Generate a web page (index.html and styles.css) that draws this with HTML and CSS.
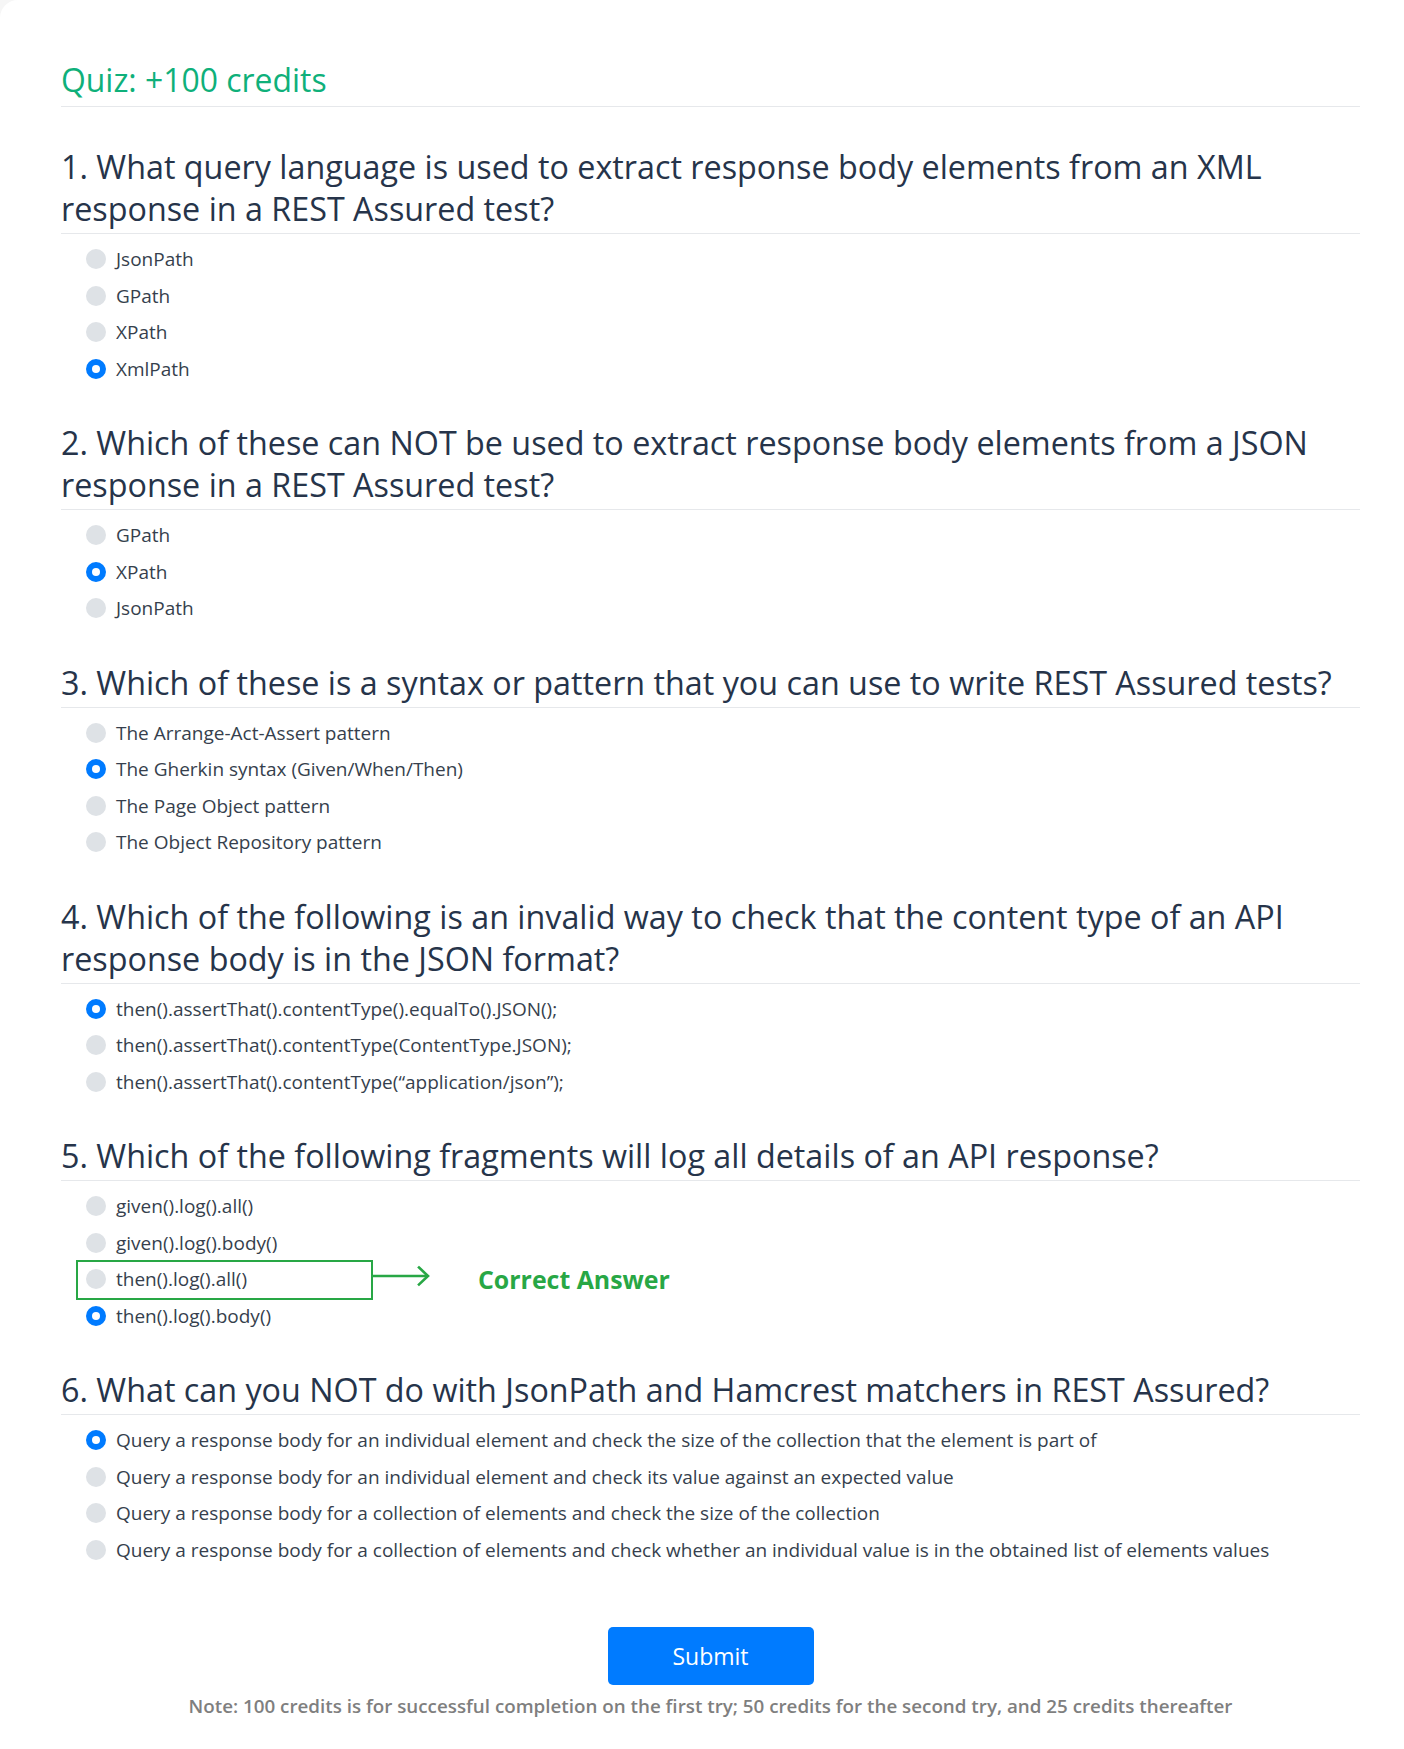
FILE: index.html
```html
<!DOCTYPE html>
<html lang="en">
<head>
<meta charset="utf-8">
<title>Quiz</title>
<link rel="stylesheet" href="styles.css">
</head>
<body>
<main class="card">
  <h2 class="quiz-title">Quiz: +100 credits</h2>
  <hr class="rule rule-title">

  <section class="question">
    <h3 class="q-head">1. What query language is used to extract response body elements from an XML response in a REST Assured test?</h3>
    <hr class="rule">
    <ul class="options">
      <li class="option"><span class="radio"></span><span class="label">JsonPath</span></li>
      <li class="option"><span class="radio"></span><span class="label">GPath</span></li>
      <li class="option"><span class="radio"></span><span class="label">XPath</span></li>
      <li class="option"><span class="radio checked"></span><span class="label">XmlPath</span></li>
    </ul>
  </section>

  <section class="question">
    <h3 class="q-head">2. Which of these can NOT be used to extract response body elements from a JSON response in a REST Assured test?</h3>
    <hr class="rule">
    <ul class="options">
      <li class="option"><span class="radio"></span><span class="label">GPath</span></li>
      <li class="option"><span class="radio checked"></span><span class="label">XPath</span></li>
      <li class="option"><span class="radio"></span><span class="label">JsonPath</span></li>
    </ul>
  </section>

  <section class="question">
    <h3 class="q-head">3. Which of these is a syntax or pattern that you can use to write REST Assured tests?</h3>
    <hr class="rule">
    <ul class="options">
      <li class="option"><span class="radio"></span><span class="label">The Arrange-Act-Assert pattern</span></li>
      <li class="option"><span class="radio checked"></span><span class="label">The Gherkin syntax (Given/When/Then)</span></li>
      <li class="option"><span class="radio"></span><span class="label">The Page Object pattern</span></li>
      <li class="option"><span class="radio"></span><span class="label">The Object Repository pattern</span></li>
    </ul>
  </section>

  <section class="question">
    <h3 class="q-head">4. Which of the following is an invalid way to check that the content type of an API response body is in the JSON format?</h3>
    <hr class="rule">
    <ul class="options">
      <li class="option"><span class="radio checked"></span><span class="label">then().assertThat().contentType().equalTo().JSON();</span></li>
      <li class="option"><span class="radio"></span><span class="label">then().assertThat().contentType(ContentType.JSON);</span></li>
      <li class="option"><span class="radio"></span><span class="label">then().assertThat().contentType(“application/json”);</span></li>
    </ul>
  </section>

  <section class="question">
    <h3 class="q-head">5. Which of the following fragments will log all details of an API response?</h3>
    <hr class="rule">
    <ul class="options">
      <li class="option"><span class="radio"></span><span class="label">given().log().all()</span></li>
      <li class="option"><span class="radio"></span><span class="label">given().log().body()</span></li>
      <li class="option option-marked">
        <span class="radio"></span><span class="label">then().log().all()</span>
        <span class="mark-box"></span>
        <svg class="mark-arrow" width="60" height="24" viewBox="0 0 60 24" aria-hidden="true">
          <path d="M0 12 H56" stroke="#28a745" stroke-width="2.6" fill="none"/>
          <path d="M47 3.5 L56 12 L47 20.5" stroke="#28a745" stroke-width="2.6" fill="none" stroke-linecap="square"/>
        </svg>
        <span class="mark-text">Correct Answer</span>
      </li>
      <li class="option"><span class="radio checked"></span><span class="label">then().log().body()</span></li>
    </ul>
  </section>

  <section class="question">
    <h3 class="q-head">6. What can you NOT do with JsonPath and Hamcrest matchers in REST Assured?</h3>
    <hr class="rule">
    <ul class="options">
      <li class="option"><span class="radio checked"></span><span class="label">Query a response body for an individual element and check the size of the collection that the element is part of</span></li>
      <li class="option"><span class="radio"></span><span class="label">Query a response body for an individual element and check its value against an expected value</span></li>
      <li class="option"><span class="radio"></span><span class="label">Query a response body for a collection of elements and check the size of the collection</span></li>
      <li class="option"><span class="radio"></span><span class="label">Query a response body for a collection of elements and check whether an individual value is in the obtained list of elements values</span></li>
    </ul>
  </section>

  <div class="actions">
    <button class="submit" type="button">Submit</button>
    <p class="note">Note: 100 credits is for successful completion on the first try; 50 credits for the second try, and 25 credits thereafter</p>
  </div>
</main>
</body>
</html>
```
FILE: styles.css
```css
html, body {
  margin: 0;
  padding: 0;
}
body {
  background: #f6f6f6;
  font-family: "Open Sans", "Noto Sans", sans-serif;
  overflow-x: hidden;
}
.card {
  background: #ffffff;
  border-top-left-radius: 18px;
  min-height: 1749px;
  box-sizing: border-box;
  padding: 62px 44px 40px 61px;
}
.quiz-title {
  margin: 0;
  font-size: 31.9px;
  line-height: 36px;
  font-weight: 400;
  color: #0fb07a;
}
.rule {
  border: 0;
  border-top: 1px solid #e6e8eb;
  margin: 0;
  height: 0;
}
.rule-title {
  margin-top: 8px;
}
.question {
  margin-top: 38px;
}
.question + .question {
  margin-top: 34px;
}
.q-head {
  margin: 0 0 4px;
  font-size: 32.3px;
  line-height: 42px;
  font-weight: 400;
  color: #26344a;
}
.options {
  list-style: none;
  margin: 7px 0 0;
  padding: 0;
}
.option {
  position: relative;
  height: 36.5px;
  display: flex;
  align-items: center;
  padding-left: 25px;
  font-size: 19px;
  color: #363f4d;
}
.radio {
  flex: none;
  width: 20px;
  height: 20px;
  border-radius: 50%;
  background: #dee2e6;
  margin-right: 10px;
  box-sizing: border-box;
}
.radio.checked {
  background: #007bff;
  border: 6px solid #007bff;
  position: relative;
}
.radio.checked::after {
  content: "";
  position: absolute;
  inset: 0;
  border-radius: 50%;
  background: #ffffff;
}
.label {
  white-space: nowrap;
}
.mark-box {
  position: absolute;
  left: 15px;
  top: 50%;
  width: 297px;
  height: 40px;
  margin-top: -19px;
  border: 2.5px solid #28a745;
  box-sizing: border-box;
}
.mark-arrow {
  position: absolute;
  left: 311px;
  top: 50%;
  margin-top: -15px;
}
.mark-text {
  position: absolute;
  left: 417px;
  top: 50%;
  transform: translateY(-50%);
  font-size: 24.9px;
  font-weight: 700;
  color: #28a745;
  white-space: nowrap;
}
.actions {
  display: flex;
  flex-direction: column;
  align-items: center;
  margin-top: 59px;
}
.submit {
  width: 206px;
  height: 58px;
  border: 0;
  border-radius: 5px;
  background: #007bff;
  color: #ffffff;
  font-family: "Open Sans", "Noto Sans", sans-serif;
  font-size: 23px;
  font-weight: 400;
  cursor: pointer;
}
.note {
  margin: 9px 0 0;
  font-size: 18.8px;
  line-height: 24px;
  font-weight: 600;
  color: #7f7f7f;
  text-align: center;
  white-space: nowrap;
}
```
